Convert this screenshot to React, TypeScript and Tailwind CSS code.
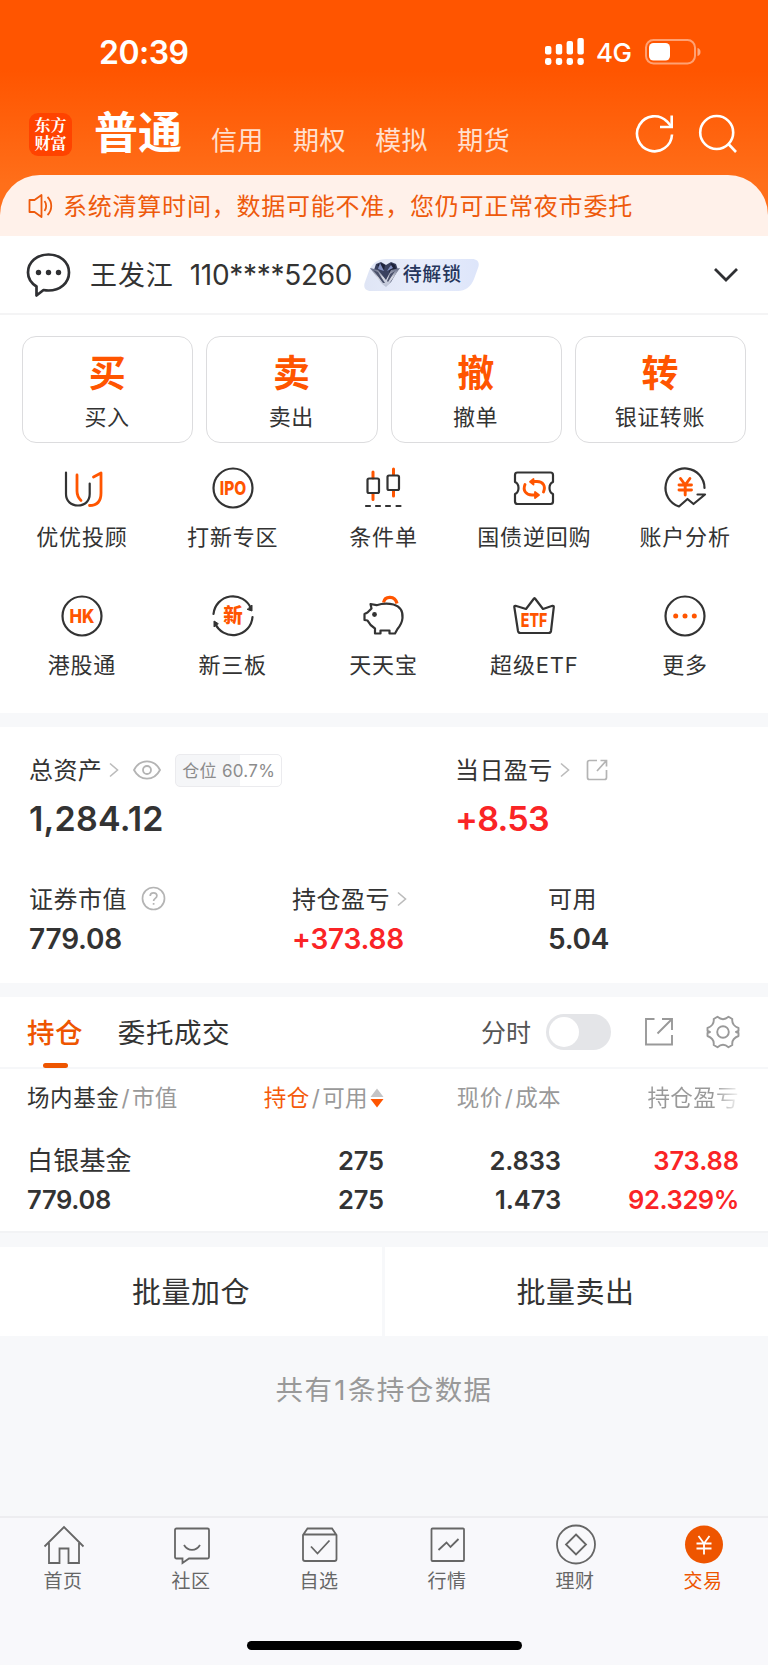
import type { ReactNode } from "react";

const ORANGE = "#ff5500";
const DARK = "#333333";

function StatusBar() {
  return (
    <div className="flex h-[105px] items-start justify-between pl-[99px] pr-[67px]">
      <span className="mt-[33px] text-[32px] leading-[40px] font-semibold tracking-[-0.5px]">20:39</span>
      <div className="mt-[36px] flex items-start">
        <svg width="40" height="30" viewBox="0 0 40 30" fill="#fff">
          <rect x="0" y="10" width="6.4" height="8.5" rx="2" />
          <rect x="10.8" y="8" width="6.4" height="10.5" rx="2" />
          <rect x="21.6" y="5" width="6.4" height="13.5" rx="2" />
          <rect x="32.4" y="2" width="6.4" height="16.5" rx="2" />
          <rect x="0" y="22" width="6.4" height="7" rx="2.4" />
          <rect x="10.8" y="22" width="6.4" height="7" rx="2.4" />
          <rect x="21.6" y="22" width="6.4" height="7" rx="2.4" />
          <rect x="32.4" y="22" width="6.4" height="7" rx="2.4" />
        </svg>
        <span className="ml-[11px] mt-[2px] w-[37px] text-[26px] leading-[30px] font-medium tracking-[-0.5px]">4G</span>
        <svg className="ml-[12px] mt-[1px]" width="56" height="28" viewBox="0 0 56 28">
          <rect x="1" y="3" width="49" height="23.5" rx="7.5" fill="none" stroke="#fff" strokeOpacity=".45" strokeWidth="2" />
          <rect x="4" y="6" width="21" height="17.5" rx="4.5" fill="#fff" />
          <path d="M52.5 11v8c2-.6 3-2 3-4s-1-3.400-3-4z" fill="#fff" fillOpacity=".5" />
        </svg>
      </div>
    </div>
  );
}

function TopNav() {
  return (
    <div className="flex h-[70px] items-start pl-[29px] pr-[30px]">
      <div className="mt-[8px] h-[43px] w-[43px] rounded-[9px] bg-[#ff4300] px-[5px] pt-[3px] text-center font-['Noto_Serif_CJK_SC','Noto_Sans_CJK_SC',serif] text-[16px] leading-[18px] font-bold">
        东方财富
      </div>
      <span className="ml-[22px] mt-[1px] text-[44px] leading-[54px] font-bold">普通</span>
      <div className="ml-[29px] mt-[18px] flex gap-[29.5px] text-[26px] leading-[36px] tracking-[0.3px] text-[#ffe0d0]">
        <span>信用</span>
        <span>期权</span>
        <span>模拟</span>
        <span>期货</span>
      </div>
      <svg className="ml-auto mt-[9px]" width="40" height="40" viewBox="0 0 40 40" fill="none" stroke="#fff" strokeWidth="2.6">
        <path d="M37 20.500A17.500 17.500 0 1 1 32 7.500l4 4.500" />
        <path d="M36.700 1.500v11.500H25" />
      </svg>
      <svg className="ml-[23px] mt-[9px]" width="40" height="40" viewBox="0 0 40 40" fill="none" stroke="#fff" strokeWidth="2.6">
        <circle cx="18.700" cy="18.500" r="16.500" />
        <path d="M30 29.500l8 8.500" />
      </svg>
    </div>
  );
}

function Notice() {
  return (
    <div className="flex h-[61px] items-center rounded-t-[40px] bg-[#fff1ea] pl-[28px] text-[#ee5a0c]">
      <svg width="26" height="26" viewBox="0 0 26 26" fill="none" stroke="currentColor" strokeWidth="1.8" strokeLinejoin="round">
        <path d="M1.500 7h5l7-5v22l-7-5h-5z" />
        <path d="M16.500 8c2.200 2.600 2.200 7.400 0 10M19.500 4c5 5 5 13 0 18" />
      </svg>
      <span className="ml-[9px] mt-[2px] text-[24px] tracking-[0.78px]">系统清算时间，数据可能不准，您仍可正常夜市委托</span>
    </div>
  );
}

function AccountRow() {
  return (
    <div className="flex h-[79px] items-center border-b-2 border-[#f4f4f5] pl-[26px] pr-[28px]">
      <svg width="45" height="46" viewBox="0 0 45 46" fill="none" stroke="#2f3033" strokeWidth="2.700" strokeLinejoin="round">
        <path d="M10.500 34.500C5 31 2 26 2 20.500 2 10 11 2.500 22.500 2.500S43 10 43 20.500 34 38.500 22.500 38.500c-1.800 0-3.500-.2-5-.5L10.500 43.500z" />
        <g fill="#2f3033" stroke="none">
          <circle cx="12.500" cy="20.500" r="2.700" />
          <circle cx="22.500" cy="20.500" r="2.700" />
          <circle cx="32.500" cy="20.500" r="2.700" />
        </g>
      </svg>
      <span className="ml-[19px] mt-[3px] text-[27px] tracking-[0.9px] text-[#333]">王发江</span>
      <span className="ml-[16px] mt-[1px] w-[163px] text-[28px] tracking-[-0.3px] text-[#333]">110****5260</span>
      <div className="relative ml-[11px] flex h-[32px] w-[115px] items-center pl-[39px] text-[19px] font-medium tracking-[0.6px] text-[#26365c]">
        <svg className="absolute inset-0" width="115" height="32" viewBox="0 0 115 32">
          <defs>
            <linearGradient id="badge" x1="0" x2="1">
              <stop offset="0" stopColor="#dfe5f5" />
              <stop offset=".5" stopColor="#e8edfb" />
              <stop offset="1" stopColor="#dde5fa" />
            </linearGradient>
            <linearGradient id="wing" x1="0" x2="0" y1="0" y2="1">
              <stop offset="0" stopColor="#5c6480" />
              <stop offset=".5" stopColor="#d5d8e2" />
              <stop offset="1" stopColor="#b9c0d4" />
            </linearGradient>
          </defs>
          <path d="M22 0h86c6 0 8 4 6 9l-4 11c-3 8-9 12-16 12H7c-6 0-8-4-6-9L5 12C8 4 14 0 22 0z" fill="url(#badge)" />
          <path d="M12 5l5-2 5 3 5-3 5 2 2 6-7 12-5 4-5-4-7-12z" fill="#39415f" />
          <path d="M13 6l4-2 4 2-1 5zM27 4l4 2 1 4-7 4z" fill="#1d2239" />
          <path d="M16 4l4 8-6-2zM27 6l-4 6 6-3z" fill="#8391c2" />
          <path d="M6 9l8 2 8 10 5-10 9-2-11 16-3 3-4-3z" fill="url(#wing)" />
          <path d="M9 11l5 2 7 11-2 0zM31 12l-5 3-3 7 1 1z" fill="#4a516b" />
        </svg>
        <span className="relative top-[1px]">待解锁</span>
      </div>
      <svg className="ml-auto" width="28" height="18" viewBox="0 0 28 18" fill="none" stroke="#2f3033" strokeWidth="2.800">
        <path d="M3 3l11 11L25 3" />
      </svg>
    </div>
  );
}

const actions = [
  { mark: "买", label: "买入" },
  { mark: "卖", label: "卖出" },
  { mark: "撤", label: "撤单" },
  { mark: "转", label: "银证转账" },
];

function ActionCards() {
  return (
    <div className="grid grid-cols-4 gap-[13px] px-[22px] pt-[21px]">
      {actions.map((a) => (
        <button key={a.mark} className="flex h-[107px] flex-col items-center rounded-[14px] border-[1.5px] border-[#dcdcde]">
          <span className="mt-[12px] mr-[1px] text-[37px] leading-[50px] font-bold text-[#ff5500]">{a.mark}</span>
          <span className="mt-[2px] mr-[1px] text-[22px] leading-[32px] tracking-[0.6px] text-[#333]">{a.label}</span>
        </button>
      ))}
    </div>
  );
}

function Icon({ children }: { children: ReactNode }) {
  return (
    <svg width="44" height="44" viewBox="0 0 44 44" fill="none" stroke={DARK} strokeWidth="2.200" strokeLinecap="round" strokeLinejoin="round">
      {children}
    </svg>
  );
}

function IconText({ children, size, y, width }: { children: string; size: number; y: number; width: number }) {
  return (
    <text x="22" y={y} textAnchor="middle" textLength={width} lengthAdjust="spacingAndGlyphs" fontSize={size} fontWeight="800" fill={ORANGE} stroke="none">
      {children}
    </text>
  );
}

const services: { label: string; icon: ReactNode }[] = [
  {
    label: "优优投顾",
    icon: (
      <Icon>
        <path d="M6 6.500V28c0 7 5 11.500 12 11.500S29.700 35 29.700 28V17.500" />
        <path d="M17 9v16c0 4 1 6.500 4 9.500M33.500 11L41 7v20c0 8-4 12.500-11.500 12.500" stroke={ORANGE} strokeWidth="2.800" />
      </Icon>
    ),
  },
  {
    label: "打新专区",
    icon: (
      <Icon>
        <circle cx="22" cy="22" r="19.500" />
        <IconText size={19} y={28.800} width={26.500}>IPO</IconText>
      </Icon>
    ),
  },
  {
    label: "条件单",
    icon: (
      <Icon>
        <path d="M12 6v6M12 28v5.500M32.500 3v5.500M32.500 25v5" stroke={ORANGE} strokeWidth="3" />
        <rect x="6.500" y="12.500" width="11.500" height="14.500" rx="1.500" />
        <rect x="26.500" y="9.500" width="11.500" height="14.500" rx="1.500" />
        <path d="M5 40h4M15 40h4M25 40h4M35.500 40h4" />
      </Icon>
    ),
  },
  {
    label: "国债逆回购",
    icon: (
      <Icon>
        <path d="M5.500 6.500h33q2.500 0 2.500 2.500v7q-3.500 1.500-3.500 6t3.500 6v7.500q0 2.500-2.500 2.500h-33Q3 38 3 35.500V28q3.500-1.500 3.500-6T3 16V9q0-2.500 2.500-2.500z" />
        <g stroke={ORANGE} strokeWidth="2.900">
          <path d="M13 18.500c-2.500 6 1 10.500 7 10.500h4M20.500 15.500H25c6 0 9 4.500 6.500 10.500" />
          <path d="M21.500 13v5.500L18 15.700zM23 26v6l4-3z" fill={ORANGE} strokeWidth="1.800" />
        </g>
      </Icon>
    ),
  },
  {
    label: "账户分析",
    icon: (
      <Icon>
        <path d="M41.500 22A19.500 19.500 0 1 0 16 40.500l8.500-7.500 6 5L42 28.500h-7.500" />
        <path d="M17.500 12.500l4.700 6.500 4.700-6.500M16 19h12.500M16 24h12.500M22.200 19v10" stroke={ORANGE} strokeWidth="2.900" />
      </Icon>
    ),
  },
  {
    label: "港股通",
    icon: (
      <Icon>
        <circle cx="22" cy="22" r="19.500" />
        <IconText size={19} y={28.800} width={25}>HK</IconText>
      </Icon>
    ),
  },
  {
    label: "新三板",
    icon: (
      <Icon>
        <path d="M2.500 20A19.500 19.500 0 0 1 40 14.500M41.500 23A19.500 19.500 0 0 1 4 29" />
        <path d="M41 11.500v5.500l-4.500-1.500zM3 32.500V27l4 2.500z" fill={DARK} strokeWidth="1" />
        <IconText size={20} y={29} width={19.500}>新</IconText>
      </Icon>
    ),
  },
  {
    label: "天天宝",
    icon: (
      <Icon>
        <path d="M22.500 8.500C24 1.500 34 1.500 36 9.500" stroke={ORANGE} strokeWidth="3.200" strokeLinecap="butt" />
        <path d="M9.500 10l6 1.200c5-1.500 11-2 17-.7 6.500 1.800 9.500 7 9 13.500-.4 4.500-2.500 8-5 11l-2.500 4.500h-5.500V36.500h-9V39.500H14v-5C10 32 8 29.500 6.500 26.500L3.500 26v-6l3-1.500 4-4z" />
        <circle cx="13.500" cy="20.500" r="2.400" fill={DARK} stroke="none" />
      </Icon>
    ),
  },
  {
    label: "超级ETF",
    icon: (
      <Icon>
        <path d="M3.500 11.800L14 15l8-10.500q.5-.5 1 0L31 15l9.500-3.200q1.500-.3 1.300 1.200L39 37q-.3 2-2.500 2h-28Q6.400 39 6 37L2.300 13q-.2-1.500 1.200-1.200z" />
        <IconText size={19} y={32.800} width={26.500}>ETF</IconText>
      </Icon>
    ),
  },
  {
    label: "更多",
    icon: (
      <Icon>
        <circle cx="22" cy="22" r="19.500" />
        <g fill={ORANGE} stroke="none">
          <circle cx="12.700" cy="22" r="2.500" />
          <circle cx="22" cy="22" r="2.500" />
          <circle cx="31.300" cy="22" r="2.500" />
        </g>
      </Icon>
    ),
  },
];

function Services() {
  return (
    <div className="grid grid-cols-5 pl-[6.500px] pr-[7.500px] pt-[23px]">
      {services.map((s) => (
        <div key={s.label} className="flex h-[128px] flex-col items-center">
          {s.icon}
          <span className="mt-[11px] text-[22px] leading-[32px] tracking-[0.8px] text-[#333]">{s.label}</span>
        </div>
      ))}
    </div>
  );
}

function Chevron() {
  return (
    <svg className="ml-[6px]" width="12" height="18" viewBox="0 0 12 18" fill="none" stroke="#bbb" strokeWidth="1.600">
      <path d="M2 2.500L9.500 9 2 15.500" />
    </svg>
  );
}

function Assets() {
  return (
    <div className="h-[256px] px-[29px] pt-[24px] text-[#333]">
      <div className="flex">
        <div className="w-[426px]">
          <div className="flex h-[38px] items-center text-[24px] tracking-[0.4px]">
            <span className="mt-[2px]">总资产</span>
            <Chevron />
            <svg className="ml-[13px]" width="28" height="20" viewBox="0 0 28 20" fill="none" stroke="#b4b4b4" strokeWidth="1.800">
              <path d="M1 10C7-1.500 21-1.500 27 10 21 21.500 7 21.500 1 10z" />
              <circle cx="14" cy="10" r="4" />
            </svg>
            <div className="ml-[14px] flex h-[33px] w-[107px] items-center rounded-[5px] border-[1.5px] border-[#ebebee] bg-[linear-gradient(to_right,#f5f6f8_60.7%,#fff_60.7%)] pl-[6px] pt-[3px] text-[17px] tracking-[0.3px] whitespace-pre text-[#8c8c8c]">
              仓位 60.7%
            </div>
          </div>
          <div className="mt-[9px] text-[34px] leading-[42px] font-semibold tracking-[0.2px]">1,284.12</div>
        </div>
        <div>
          <div className="flex h-[38px] items-center text-[24px] tracking-[0.4px]">
            <span className="mt-[2px]">当日盈亏</span>
            <Chevron />
            <svg className="ml-[15px]" width="22" height="22" viewBox="0 0 22 22" fill="none" stroke="#b4b4b4" strokeWidth="1.700">
              <path d="M11 1.500H3.500q-2 0-2 2v15q0 2 2 2h15q2 0 2-2V11M14.500 1.500h6v6M20 2l-9 10" />
            </svg>
          </div>
          <div className="mt-[9px] text-[34px] leading-[42px] font-semibold tracking-[-0.7px] text-[#fa2426]">+8.53</div>
        </div>
      </div>
      <div className="mt-[41px] flex">
        <div className="w-[263px]">
          <div className="flex h-[36px] items-center text-[24px] tracking-[0.5px]">
            <span className="mt-[1px]">证券市值</span>
            <svg className="ml-[14px] -mt-[2px]" width="25" height="25" viewBox="0 0 25 25" fill="none" stroke="#b4b4b4" strokeWidth="1.700">
              <circle cx="12.500" cy="12.500" r="11" />
              <path d="M9.200 10c0-2 1.500-3.200 3.300-3.200s3.400 1.200 3.400 3c0 2.600-3.300 2.500-3.300 5.200M12.600 17v1.800" />
            </svg>
          </div>
          <div className="mt-[4px] text-[28px] leading-[36px] font-semibold tracking-[-0.2px]">779.08</div>
        </div>
        <div className="w-[256px]">
          <div className="flex h-[36px] items-center text-[24px] tracking-[0.5px]">
            <span className="mt-[1px]">持仓盈亏</span>
            <Chevron />
          </div>
          <div className="mt-[4px] text-[28px] leading-[36px] font-semibold tracking-[-0.2px] text-[#fa2426]">+373.88</div>
        </div>
        <div>
          <div className="flex h-[36px] items-center text-[24px] tracking-[0.5px]"><span className="mt-[1px]">可用</span></div>
          <div className="mt-[4px] text-[28px] leading-[36px] font-semibold tracking-[-0.3px]">5.04</div>
        </div>
      </div>
    </div>
  );
}

function HoldingTabs() {
  return (
    <div className="flex h-[72px] items-center border-b-2 border-[#f6f7f9] pl-[27px] pr-[28px]">
      <div className="relative flex h-full items-center pt-[3px] text-[27.500px] font-medium tracking-[0.4px] text-[#ee5500]">
        持仓
        <span className="absolute bottom-[-1px] left-[16px] h-[5px] w-[25px] rounded-[2.5px] bg-[#ee5500]" />
      </div>
      <span className="ml-[35px] mt-[3px] text-[27.500px] tracking-[0.6px] text-[#333]">委托成交</span>
      <span className="ml-auto mt-[3px] text-[25px] text-[#555]">分时</span>
      <div className="ml-[15px] flex h-[36px] w-[65px] items-center rounded-full bg-[#e4e5e8] pl-[3px]">
        <span className="h-[30px] w-[30px] rounded-full bg-white" />
      </div>
      <svg className="ml-[33px]" width="30" height="30" viewBox="0 0 30 30" fill="none" stroke="#999" strokeWidth="1.900">
        <path d="M10.500 2H2v25.500h26V18M18 2h10v11M27.500 2.500L13.500 16.500" />
      </svg>
      <svg className="ml-[32px]" width="34" height="34" viewBox="0 0 34 34" fill="none" stroke="#999" strokeWidth="1.900" strokeLinejoin="round">
        <path d="M11.500 1.800Q17 6.500 22.500 1.800L26.300 4Q25.500 10.500 32.500 13v3q-2.500 1-2.500 1t2.500 1v3Q25.500 23.500 26.300 30L22.500 32.200Q17 27.500 11.500 32.200L7.700 30Q8.500 23.500 1.500 21v-3q2.500-1 2.500-1t-2.500-1v-3Q8.500 10.500 7.700 4z" />
        <circle cx="17" cy="17" r="5.800" />
      </svg>
    </div>
  );
}

function Holdings() {
  return (
    <div className="h-[164px] border-b-2 border-[#f2f3f5] pl-[27px] pr-[29px]">
      <div className="grid h-[57px] grid-cols-[180px_177px_177px_178px] items-center text-[22.5px] tracking-[0.4px] whitespace-nowrap text-[#999]">
        <span><b className="font-normal tracking-[0.6px] text-[#333]">场内基金</b><i className="px-[2px] not-italic">/</i>市值</span>
        <span className="flex items-center justify-end">
          <span className="text-[#f55a0a]">持仓</span><i className="px-[2px] not-italic">/</i>可用
          <svg className="ml-[2px]" width="14" height="20" viewBox="0 0 14 20">
            <path d="M7 .5L13.500 9H.5z" fill="#c4c4c6" />
            <path d="M7 19.500L13.500 11H.5z" fill="#ff5500" />
          </svg>
        </span>
        <span className="text-right">现价<i className="px-[2px] not-italic">/</i>成本</span>
        <span className="bg-[linear-gradient(to_right,#999_86%,#eee_99%)] bg-clip-text text-right text-transparent">持仓盈亏</span>
      </div>
      <div className="mt-[15px] grid grid-cols-[180px_177px_177px_178px] text-right text-[25.500px] leading-[39px] font-semibold tracking-[-0.1px] text-[#333]">
        <span className="text-left font-normal text-[26px] tracking-[0.2px]">白银基金</span>
        <span>275</span>
        <span>2.833</span>
        <span className="text-[#fa2426]">373.88</span>
        <span className="text-left tracking-[-0.3px]">779.08</span>
        <span>275</span>
        <span>1.473</span>
        <span className="tracking-[-0.4px] text-[#fa2426]">92.329%</span>
      </div>
    </div>
  );
}

const tabs: { label: string; icon: ReactNode }[] = [
  { label: "首页", icon: <path d="M2.500 24.500L22 5l19.500 19.500M7 21v20h10.500V26.500h9V41H37V21" /> },
  {
    label: "社区",
    icon: (
      <>
        <path d="M6.500 6.500h31q1.500 0 1.500 1.500v27q0 1.500-1.500 1.500H19L12.500 41v-4.500h-6Q5 36.500 5 35V8q0-1.500 1.500-1.500z" />
        <path d="M14 23c4 6.500 12 6.500 16 0" />
      </>
    ),
  },
  {
    label: "自选",
    icon: (
      <>
        <path d="M5 13v24q0 2 2 2h29.500q2 0 2-2V13l-4.500-6.500H9.500zM5 12.500h33.500" />
        <path d="M13 24.500l6.500 7 12-13" />
      </>
    ),
  },
  {
    label: "行情",
    icon: (
      <>
        <rect x="5.500" y="6.500" width="32.500" height="32.500" rx="1" />
        <path d="M12.500 28l8-7.500 4 4.500 8-8" />
      </>
    ),
  },
  {
    label: "理财",
    icon: (
      <>
        <circle cx="22" cy="22.500" r="19" />
        <path d="M22 12.500l10 10-10 10-10-10z" />
      </>
    ),
  },
  {
    label: "交易",
    icon: (
      <>
        <circle cx="22" cy="22.500" r="19" fill="#ee5500" stroke="none" />
        <path d="M16.500 14l5.500 7.500 5.500-7.500M14.500 21.500h15M14.500 26.500h15M22 21.500v11" stroke="#fff" />
      </>
    ),
  },
];

function TabBar() {
  return (
    <div className="h-[149px] border-t-2 border-[#ededf0] bg-[#f8f8fb]">
      <div className="grid h-[123px] grid-cols-6 pt-[4px]">
        {tabs.map((t) => (
          <div key={t.label} className={"flex flex-col items-center " + (t.label === "交易" ? "text-[#ee5500]" : "text-[#666]")}>
            <svg width="44" height="44" viewBox="0 0 44 44" fill="none" stroke="currentColor" strokeWidth="1.800">
              {t.icon}
            </svg>
            <span className="mt-[3px] mr-[2px] text-[19px] leading-[26px] tracking-[0.6px]">{t.label}</span>
          </div>
        ))}
      </div>
      <div className="mx-auto h-[9px] w-[275px] rounded-full bg-black" />
    </div>
  );
}

export default function App() {
  return (
    <div className="flex h-[1665px] w-[768px] flex-col overflow-hidden bg-[#f7f8fa] font-['Inter','Noto_Sans_CJK_SC',sans-serif]">
      <div className="bg-[linear-gradient(to_bottom,#ff5500_70px,#ff6f1a_185px)] text-white">
        <StatusBar />
        <TopNav />
        <Notice />
      </div>
      <div className="h-[477px] bg-white">
        <AccountRow />
        <ActionCards />
        <Services />
      </div>
      <div className="mt-[14px] bg-white">
        <Assets />
      </div>
      <div className="mt-[14px] bg-white">
        <HoldingTabs />
        <Holdings />
      </div>
      <div className="mt-[14px] grid grid-cols-[382px_383px] gap-[3px] text-[29px] tracking-[0.5px] text-[#333]">
        <button className="h-[89px] bg-white pt-[3px]">批量加仓</button>
        <button className="h-[89px] bg-white pt-[3px] pr-[2px]">批量卖出</button>
      </div>
      <div className="flex h-[110px] items-center justify-center text-[27.500px] tracking-[1.400px] text-[#999]">共有<span className="px-[1px]">1</span>条持仓数据</div>
      <div className="mt-auto">
        <TabBar />
      </div>
    </div>
  );
}
